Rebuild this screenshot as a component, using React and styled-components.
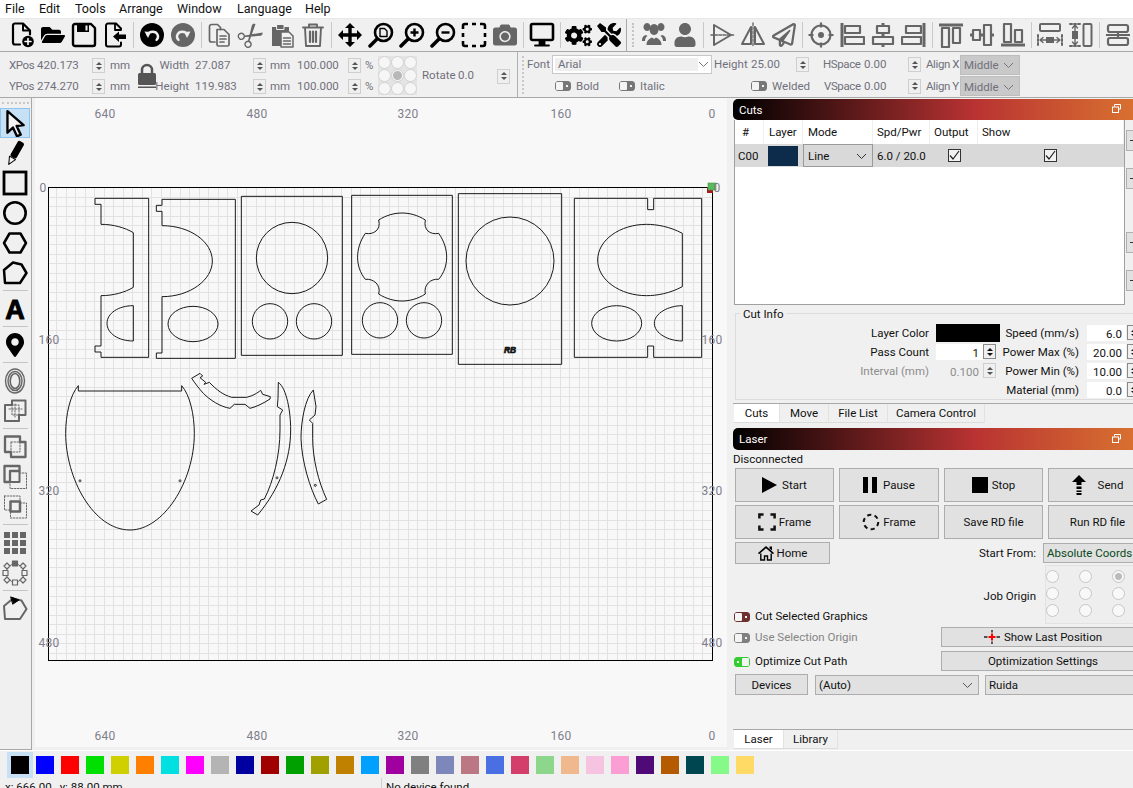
import React from 'react';
import styled, { createGlobalStyle } from 'styled-components';
import { FaCogs, FaTools, FaUser, FaCamera, FaMapMarkerAlt, FaRegPaperPlane, FaFolderOpen } from 'react-icons/fa';
import { BsScissors } from 'react-icons/bs';

const Global = createGlobalStyle`
  html, body { margin: 0; padding: 0; background: #f0f0f0; overflow: hidden; }
  * { box-sizing: border-box; }
`;

const Page = styled.div`
  width: 1133px; height: 788px; overflow: hidden; display: flex; flex-direction: column;
  background: #f0f0f0; color: #111; font: 11.5px/1 Roboto, "Open Sans", sans-serif;
`;
const MenuBar = styled.div`
  height: 18px; background: #fff; display: flex; align-items: center; padding-left: 5px; font-size: 12.5px;
`;
const MenuItem = styled.span`width: ${p => p.$w}px; flex: none;`;
const Toolbar = styled.div`
  height: 34px; display: flex; align-items: center; padding-left: 6.5px;
  border-top: 1px solid #e8e8e8; border-bottom: 1px solid #a8a8a8;
`;
const ToolBtn = styled.div`
  width: 31px; height: 31px; flex: none; display: flex; align-items: center; justify-content: center;
  color: ${p => p.$dim ? '#666' : '#000'}; font-size: 24px;
`;
const VSep = styled.div`width: 1px; height: 26px; background: #c8c8c8; margin: 0 ${p => p.$tight ? 2 : 3}px 0 2px; flex: none;`;
const BarBreak = styled.div`
  width: 13px; height: 33px; flex: none; display: flex; border-left: 1px solid #a8a8a8; margin-left: 1px;
  &::after { content: ''; width: 2px; height: 24px; margin: 4px 0 0 5px; border-left: 2px dotted #c4c4c4; }
`;
const PropBar = styled.div`
  height: 46px; display: flex; border-bottom: 1px solid #a8a8a8; color: #70707c;
`;
const PropA = styled.div`
  width: 518px; flex: none; border-right: 1px solid #b0b0b0; padding: 3px 0 0 9px; display: grid;
  grid-template-columns: 28px 55px 13px 28px 28px 34px 58px 13px 31px 51px 13px 17px 41px 39px 39px 13px;
  grid-template-rows: 21px 21px; align-items: center;
`;
const Cell = styled.span`
  white-space: nowrap; padding-left: ${p => p.$pl || 0}px;
  ${p => p.$w ? `width:${p.$w}px;flex:none;` : ''}
  ${p => p.$right ? 'justify-self:end;padding-right:6px;' : ''}
  ${p => p.$tight ? 'letter-spacing:-.4px;' : ''}
`;
const LockCell = styled.div`grid-row: 1 / span 2; grid-column: 5; display: flex; justify-content: center; color: #555;`;
const AnchorCell = styled.div`
  grid-row: 1 / span 2; grid-column: 13; display: grid; grid-template-columns: repeat(3, 13px); grid-auto-rows: 13px;
  background: #e4e4e4; width: 39px; margin-top: -1px; height: 39px;
`;
const AnchorDot = styled.i`
  display: block; border-radius: 50%; background: ${p => p.$on ? 'radial-gradient(circle,#b8b8b8 0 4px,#f4f4f4 5px)' : '#f6f6f6'}; border: 1px solid #d4d4d4;
`;
const RotateCell = styled.div`grid-row: 1 / span 2; grid-column: ${p => p.$col}; display: flex; align-items: center; padding-left: ${p => p.$pl || 0}px;`;
const Spin = styled.div`
  width: 13px; height: 15px; flex: none; border: 1px solid ${p => p.$dark ? '#8a8a8a' : '#cfcfcf'}; background: #efefef;
  display: flex; flex-direction: column; align-items: center; justify-content: center; gap: 2px;
  color: ${p => p.$dark ? '#111' : '#555'};
  &::before, &::after { content: ''; width: 0; height: 0; border-left: 3px solid transparent; border-right: 3px solid transparent; }
  &::before { border-bottom: 3px solid currentColor; }
  &::after { border-top: 3px solid currentColor; }
`;
const PropB = styled.div`flex: 1; position: relative; display: flex;`;
const Grip = styled.div`width: 9px; flex: none; &::after { content: ''; display: block; height: 38px; margin: 4px 0 0 4px; border-left: 2px dotted #c8c8c8; width: 2px; }`;
const PropBRows = styled.div`display: flex; flex-direction: column; padding-top: 2px;`;
const PropRow = styled.div`height: 22px; display: flex; align-items: center; ${p => p.$pl ? `padding-left:${p.$pl}px;` : ''}`;
const FontCombo = styled.div`
  width: ${p => p.$w}px; height: 19px; flex: none; border: 1px solid #c8c8c8; background: #fff; padding: 2px; display: flex; align-items: center;
  span { flex: 1; background: #efefef; height: 13px; padding-left: 3px; line-height: 13px; color: #70707c; }
`;
const Combo = styled.div`
  width: ${p => p.$w}px; height: ${p => p.$h || 20}px; flex: none; display: flex; align-items: center; padding-left: ${p => p.$pl || 3}px;
  background: ${p => p.$bg || '#c9c9c9'}; border: 1px solid ${p => p.$bd || '#bdbdbd'}; color: ${p => p.$color || '#70707c'};
  justify-content: space-between; padding-right: 5px; padding-top: 2px; white-space: nowrap; margin-left: ${p => p.$ml || 0}px;
`;
const Chevron = styled.svg`width: 11px; height: 7px; flex: none; margin-left: auto;`;
const Toggle = styled.i`
  display: block; width: 16px; height: 10px; flex: none; border-radius: 3px; position: relative;
  background: ${p => p.$c}; border: 1px solid ${p => p.$c};
  &::before { content: ''; position: absolute; top: 0; bottom: 0; width: 7px; border-radius: 1px; background: #f4f4f4; ${p => p.$on ? 'right: 0;' : 'left: 0;'} }
  &::after { content: ''; position: absolute; top: 3px; width: 2px; height: 2px; background: #f4f4f4; ${p => p.$on ? 'left: 2px;' : 'right: 2px;'} }
`;
const Main = styled.div`height: 652px; display: flex;`;
const ToolCol = styled.div`
  width: 32px; flex: none; border-right: 1px solid #a8a8a8; border-bottom: 1px solid #a8a8a8; display: flex; flex-direction: column;
`;
const ColGrip = styled.div`height: 10px; flex: none; &::after { content:''; display:block; margin: 4px 2px 0; border-top: 2px dotted #c8c8c8; }`;
const SideBtn = styled.div`
  height: 30px; width: 30px; flex: none; display: flex; align-items: center; justify-content: center;
  color: ${p => p.$dim ? '#666' : '#000'}; font-size: 24px;
  ${p => p.$active ? 'background:#c6e1f5;border:1px solid #8fc4ee;' : ''}
`;
const HSep = styled.div`height: 6px; flex: none; margin: 0 3px; &::after{content:'';display:block;height:1px;background:#c4c4c4;margin-top:2px;}`;
const CanvasWrap = styled.div`width: 695px; flex: none; position: relative; overflow: hidden; background: #f0f0f0;`;
const CanvasSvg = styled.svg`position: absolute; left: 0; top: 0; display: block;`;
const RulerText = styled.text`font: 12px Roboto, "Open Sans", sans-serif; letter-spacing: .3px; fill: #7e7e8c; text-anchor: middle; dominant-baseline: central;`;
const Gutter = styled.div`width: 6px; flex: none;`;
const Dock = styled.div`width: 400px; flex: none; display: flex; flex-direction: column; overflow: hidden;`;
const DockHead = styled.div`
  height: ${p => p.$h}px; margin-top: ${p => p.$mt}px; flex: none; display: flex; align-items: center; justify-content: space-between;
  padding: 2px 12px 0 6px; color: #fff; border-radius: 5px 0 0 5px;
  background: linear-gradient(90deg, #000 0%, #b83232 60%, #d87030 100%);
  svg { margin-top: -4px; }
`;
const TableArea = styled.div`height: 185px; flex: none; display: flex; padding-left: 1px;`;
const TableBox = styled.div`width: 391px; flex: none; background: #fff; border: 1px solid #a0a0a0; border-top: 0;`;
const TableRowGrid = styled.div`
  display: grid; grid-template-columns: 29px 39px 70px 57px 48px 1fr; height: ${p => p.$h}px; align-items: center;
  background: ${p => p.$bg || '#fff'};
`;
const Th = styled.div`height: 100%; display: flex; align-items: center; padding: 2px 0 0 ${p => p.$pl || 5}px; border-right: 1px solid #efefef;`;
const Td = styled.div`height: 100%; display: flex; align-items: center; padding-left: ${p => p.$pl || 0}px; padding-top: ${p => p.$text ? 2 : 0}px; justify-content: ${p => p.$center ? 'center' : 'flex-start'};`;
const LayerSwatch = styled.div`width: 30px; height: 20px; margin-left: 4px; background: #0d2b4b;`;
const Check = styled.div`
  width: 13px; height: 13px; border: 1px solid #333; background: #f2f2f2; display: flex; align-items: center; justify-content: center;
`;
const Strip = styled.div`flex: 1; padding-left: 1px; display: flex; flex-direction: column;`;
const StripBtn = styled.div`
  width: 20px; height: 21px; margin-top: ${p => p.$mt}px; background: #e1e1e1; border: 1px solid #b0b0b0; display: flex; align-items: center; padding-left: 3px;
  &::after { content: ''; width: 3px; height: 1px; background: #333; }
`;
const Group = styled.div`
  height: 87px; margin: 8px 0 0 2px; flex: none; border: 1px solid #dcdcdc; position: relative; padding: 9px 0 0 0; width: 420px;
`;
const GroupTitle = styled.span`position: absolute; top: -5px; left: 4px; background: #f0f0f0; padding: 0 3px;`;
const InfoRow = styled.div`
  height: 19px; display: grid; grid-template-columns: 193px 71px 79px 8px 40px 13px; align-items: center;
  color: ${p => p.$dis ? '#8c8c8c' : 'inherit'};
`;
const InfoLabel = styled.span`text-align: right; white-space: nowrap; padding-top: 2px; color: ${p => p.$solid ? '#111' : 'inherit'};`;
const FieldPair = styled.div`display: flex; align-items: center; padding-left: 7px;`;
const Input = styled.div`
  width: ${p => p.$w}px; height: 16px; background: ${p => p.$off ? 'transparent' : '#fff'}; flex: none; text-align: right; padding-right: 4px; line-height: 18px;
  color: ${p => p.$solid ? '#111' : 'inherit'};
`;
const ColorWell = styled.div`height: 18px; width: 64px; background: #000;`;
const Tabs = styled.div`height: 20px; margin-top: ${p => p.$mt || 0}px; flex: none; display: flex; border-top: 1px solid #a8a8a8; padding-left: 1px; ${p => p.$foot ? 'margin-top:auto;margin-bottom:1px;' : ''}`;
const Tab = styled.div`
  width: ${p => p.$w}px; flex: none; display: flex; align-items: center; justify-content: center; padding-top: 2px;
  background: ${p => p.$on ? '#fff' : 'transparent'}; border-bottom: 1px solid ${p => p.$on ? '#ddd' : '#dcdcdc'}; border-right: 1px solid #e2e2e2;
`;
const StatusLine = styled.div`height: 18px; flex: none; display: flex; align-items: center; padding-top: 2px;`;
const BtnRow = styled.div`display: grid; grid-template-columns: 99px 100px 99px 99px; column-gap: 5px; margin: ${p => p.$mt || 0}px 0 0 2px; height: 34px; flex: none; width: 420px;`;
const Btn = styled.div`
  display: flex; align-items: center; justify-content: center; gap: ${p => p.$gap ?? 5}px; background: #e1e1e1; border: 1px solid #adadad; white-space: nowrap; padding-top: 2px;
  ${p => p.$w ? `width:${p.$w}px;flex:none;` : ''} ${p => p.$h ? `height:${p.$h}px;` : ''}
  svg { margin-top: -2px; }
`;
const HomeRow = styled.div`height: 22px; margin: 3px 0 0 2px; flex: none; display: flex; align-items: center; width: 410px;`;
const RightLabel = styled.span`margin-left: auto; padding: 2px 7px 0 0;`;
const OriginRow = styled.div`height: 59px; margin-top: 1px; flex: none; display: flex; padding-left: 1px; width: 400px;`;
const OptionLine = styled.div`display: flex; align-items: center; gap: 5px; padding-top: 2px; color: ${p => p.$dis ? '#858585' : 'inherit'}; white-space: nowrap; flex: none; ${p => p.$w ? `width:${p.$w}px;` : ''}`;
const BottomOpt = styled(OptionLine)`align-self: flex-end; height: 16px;`;
const OriginLabel = styled.span`margin-left: auto; align-self: center; padding: 4px 9px 0 0; white-space: nowrap;`;
const RadioGrid = styled.div`
  width: 88px; flex: none; display: grid; grid-template-columns: repeat(3, 33px); grid-auto-rows: 17px; background: #eeeeee; border: 1px solid #e2e2e2;
  padding: 4px 0 0 0; justify-items: start; border-right: 0;
`;
const Radio = styled.i`
  display: block; width: 13px; height: 13px; border-radius: 50%; border: 1px solid #c6c6c6;
  background: ${p => p.$on ? 'radial-gradient(circle,#bbb 0 3px,#f6f6f6 4px)' : '#f8f8f8'};
`;
const OptRow = styled.div`height: 20px; margin: ${p => p.$mt}px 0 0 1px; flex: none; display: flex; align-items: center;`;
const DeviceRow = styled.div`height: 21px; margin: 3px 0 0 2px; flex: none; display: flex; align-items: center; width: 420px;`;
const Palette = styled.div`height: 28px; flex: none; display: flex; align-items: center; padding-left: 11px; gap: 7px; border-top: 1px solid #fff;`;
const Swatch = styled.div`
  width: 18px; height: 18px; flex: none; background: ${p => p.$c};
  ${p => p.$sel ? 'outline: 4px solid #c6e1f5; box-shadow: 0 0 0 3px #c6e1f5;' : ''}
`;
const StatusBar = styled.div`height: 10px; flex: none; display: flex; overflow: hidden; line-height: 15px;`;
const StatusCell = styled.div`width: ${p => p.$w}px; flex: none; padding-left: ${p => p.$pl}px; white-space: nowrap; border-right: ${p => p.$line ? '1px solid #d0d0d0' : '0'}; padding-top: 2px;`;
const Scissors = styled(BsScissors)`transform: rotate(50deg);`;
const Gears = styled(FaCogs)`font-size: 27px;`;

const Svg = ({ s = 26, children, ...r }) => <svg width={s} height={s} viewBox="0 0 26 26" fill="none" stroke="currentColor" strokeLinejoin="round" strokeLinecap="round" {...r}>{children}</svg>;

const I = {
  New: () => <Svg><path d="M11 22.5H6a2 2 0 0 1-2-2V3.5a2 2 0 0 1 2-2h8l7 7v4" strokeWidth="2.2" /><path d="M14 2v6.5h6" strokeWidth="2" /><circle cx="19" cy="19.5" r="5.8" fill="currentColor" stroke="none" /><path d="M19 16.5v6M16 19.5h6" stroke="#fff" strokeWidth="1.6" /></Svg>,
  Save: () => <Svg><path d="M2 4a2 2 0 0 1 2-2h16l4 4v16a2 2 0 0 1-2 2H4a2 2 0 0 1-2-2z" strokeWidth="2.4" /><path d="M6 2h12v8H6z" fill="currentColor" stroke="none" /><path d="M14.5 3.5h2v5h-2z" fill="#f0f0f0" stroke="none" /></Svg>,
  Import: () => <Svg><path d="M19 7v-.5L14 1.5H6a2 2 0 0 0-2 2v19a2 2 0 0 0 2 2h11a2 2 0 0 0 2-2v-2" strokeWidth="2" /><path d="M13 2v6h6" strokeWidth="1.8" /><path d="M11 14.5l6-5v3h7v4.500h-7v3z" fill="currentColor" stroke="none" /></Svg>,
  Undo: () => <Svg><circle cx="13" cy="13" r="12" fill="currentColor" stroke="none" /><path d="M8.500 12.500c2-3.500 8-4 10 0 1 2 .5 4-1 5.500" stroke="#f0f0f0" strokeWidth="2.400" /><path d="M5.500 9.500l6.500 .5-3 6z" fill="#f0f0f0" stroke="none" /></Svg>,
  Redo: () => <Svg><circle cx="13" cy="13" r="12" fill="currentColor" stroke="none" /><path d="M17.500 12.500c-2-3.500-8-4-10 0-1 2-.5 4 1 5.500" stroke="#f0f0f0" strokeWidth="2.400" /><path d="M20.500 9.500l-6.500 .5 3 6z" fill="#f0f0f0" stroke="none" /></Svg>,
  Copy: () => <Svg strokeWidth="1.700"><path d="M8 20H4.500a2 2 0 0 1-2-2V4.500a2 2 0 0 1 2-2h6l3 3v2" /><path d="M10 7.500h7l5 5v10a1.500 1.500 0 0 1-1.500 1.500h-9A1.500 1.500 0 0 1 10 22.500z" /><path d="M13 14h6M13 17h6M13 20h4" /></Svg>,
  Paste: () => <Svg><path d="M3 5h17v19H3z" fill="currentColor" stroke="none" /><path d="M8 2.500h7v5H8z" fill="currentColor" stroke="#f0f0f0" strokeWidth="1" /><path d="M12 10h8l4 4v11H12z" fill="#f0f0f0" stroke="currentColor" strokeWidth="1.500" /><path d="M14.500 16h7M14.500 19h7M14.500 22h7" strokeWidth="1.400" /></Svg>,
  Trash: () => <Svg strokeWidth="1.900"><path d="M3 5.500h20M9 5.500V2.500h8v3M5 5.500l1 18.500h14l1-18.500" /><path d="M10 9.500v10.500M13 9.500v10.500M16 9.500v10.500" strokeWidth="2.200" /></Svg>,
  Move: () => <Svg><path d="M13 1l5 5h-3.300v5.300H20V8l5 5-5 5v-3.300h-5.300V20H18l-5 5-5-5h3.300v-5.300H6V18l-5-5 5-5v3.300h5.300V6H8z" fill="currentColor" stroke="none" /></Svg>,
  ZoomPage: () => <Svg><circle cx="15.500" cy="10.500" r="8.500" strokeWidth="2.600" /><path d="M9 17l-7 7" strokeWidth="3.500" /><path d="M12 6.500h4.500l2.500 2.500v5.500h-7z" strokeWidth="1.400" /></Svg>,
  ZoomIn: () => <Svg><circle cx="15.500" cy="10.500" r="8.500" strokeWidth="2.600" /><path d="M9 17l-7 7" strokeWidth="3.500" /><path d="M15.500 6.500v8M11.500 10.500h8" strokeWidth="2.400" strokeLinecap="butt" /></Svg>,
  ZoomOut: () => <Svg><circle cx="15.500" cy="10.500" r="8.500" strokeWidth="2.600" /><path d="M9 17l-7 7" strokeWidth="3.500" /><path d="M11.500 10.500h8" strokeWidth="2.400" strokeLinecap="butt" /></Svg>,
  Frame: () => <Svg><path d="M2 7V4a2 2 0 0 1 2-2h3M11 2h4M19 2h3a2 2 0 0 1 2 2v3M24 11v4M24 19v3a2 2 0 0 1-2 2h-3M15 24h-4M7 24H4a2 2 0 0 1-2-2v-3M2 15v-4" strokeWidth="2.600" strokeLinecap="butt" /></Svg>,
  Monitor: () => <Svg><rect x="2" y="2" width="22" height="16" rx="1.500" strokeWidth="2.600" /><path d="M10.500 18.500h5v4h-5zM6 23.500h14" fill="currentColor" strokeWidth="1.800" /></Svg>,
  Group: () => <Svg><path d="M6 9a3.500 4 0 1 1 .1 0zM1 18c0-3 2-4.500 4-5l1.500 1c-1.500 1-2.500 2.500-2.500 5H1zM20 9a3.500 4 0 1 0-.1 0zM25 18c0-3-2-4.500-4-5l-1.500 1c1.500 1 2.500 2.500 2.500 5h3z" fill="currentColor" stroke="none" /><path d="M13 13a4.500 5.500 0 1 1 .1 0zM5.500 23c0-4.500 3-6.500 5.500-7.500l2 1.500 2-1.500c2.500 1 5.500 3 5.500 7.500z" fill="currentColor" stroke="none" /></Svg>,
  Flip: () => <Svg strokeWidth="2"><path d="M5 3l17 10-17 10z" /><path d="M2 13h23" strokeDasharray="2.500 1.500" strokeWidth="1.600" /></Svg>,
  Mirror: () => <Svg strokeWidth="2"><path d="M11 5v17H2z" /><path d="M15 5v17h9z" /><path d="M13 1v24" strokeDasharray="2.500 1.500" strokeWidth="1.400" /></Svg>,
  Target: () => <Svg strokeWidth="2.200"><circle cx="13" cy="13" r="9.500" /><circle cx="13" cy="13" r="3" fill="currentColor" stroke="none" /><path d="M13 .5v5M13 20.500v5M.5 13h5M20.500 13h5" strokeLinecap="butt" /></Svg>,
  AlignL: () => <Svg strokeWidth="2.200"><path d="M3 1v24" strokeWidth="3" strokeLinecap="butt" /><rect x="6" y="4" width="15" height="7" /><rect x="6" y="15" width="19" height="7" /></Svg>,
  AlignC: () => <Svg strokeWidth="2.200"><path d="M13 1v24" strokeWidth="3" strokeLinecap="butt" /><rect x="7" y="4" width="12" height="7" fill="#f0f0f0" /><rect x="3" y="15" width="20" height="7" fill="#f0f0f0" /></Svg>,
  AlignR: () => <Svg strokeWidth="2.200"><path d="M23 1v24" strokeWidth="3" strokeLinecap="butt" /><rect x="5" y="4" width="15" height="7" /><rect x="1" y="15" width="19" height="7" /></Svg>,
  AlignT: () => <Svg strokeWidth="2.200"><path d="M1 3h24" strokeWidth="3" strokeLinecap="butt" /><rect x="4" y="6" width="7" height="19" /><rect x="15" y="6" width="7" height="15" /></Svg>,
  AlignM: () => <Svg strokeWidth="2.200"><path d="M1 13h24" strokeWidth="3" strokeLinecap="butt" /><rect x="4" y="8" width="7" height="10" fill="#f0f0f0" /><rect x="15" y="3" width="7" height="20" fill="#f0f0f0" /></Svg>,
  AlignB: () => <Svg strokeWidth="2.200"><path d="M1 23h24" strokeWidth="3" strokeLinecap="butt" /><rect x="4" y="2" width="7" height="18" /><rect x="15" y="8" width="7" height="12" /></Svg>,
  DistH: () => <Svg strokeWidth="2"><rect x="3" y="2" width="20" height="7" rx="1" /><path d="M1 13v10M25 13v10" strokeDasharray="2 2" /><rect x="9" y="15" width="8" height="6" fill="currentColor" stroke="none" /><path d="M3 18h20M6 15.500L3 18l3 2.500M20 15.500l3 2.500-3 2.500" strokeWidth="1.400" /></Svg>,
  DistV: () => <Svg strokeWidth="2"><rect x="15.500" y="2" width="8" height="22" rx="1" /><path d="M2 2h10M2 24h10" strokeDasharray="2 2" /><rect x="4" y="9" width="6" height="8" fill="currentColor" stroke="none" /><path d="M7 3v20M4.500 6L7 3l2.500 3M4.500 20L7 23l2.500-3" strokeWidth="1.400" /></Svg>,
  SameH: () => <Svg strokeWidth="2.200"><rect x="3" y="3" width="20" height="7" rx="2" /><rect x="3" y="16" width="20" height="7" rx="2" /><path d="M13 10v6M1 13h24" strokeLinecap="butt" /></Svg>,
  Lock: () => <svg width="20" height="26" viewBox="0 0 20 26"><path d="M5 11V7a5 5 0 0 1 10 0v4" fill="none" stroke="currentColor" strokeWidth="2.500" /><rect x="1" y="10" width="18" height="12" rx="1.500" fill="currentColor" /><rect x="1" y="23.500" width="18" height="1.500" fill="currentColor" /></svg>,
  Select: () => <Svg s={28}><path d="M6 2l15 13-6.500 .8 3.800 8-3.500 1.600-3.700-8.200L6 22z" fill="#f4f4f4" stroke="#000" strokeWidth="2.200" /></Svg>,
  Pencil: () => <Svg><g transform="rotate(30 13 13)"><rect x="9.800" y="0" width="7" height="18" rx="2" fill="currentColor" stroke="none" /><path d="M9.800 18.500h7L13.300 26z" fill="#f0f0f0" stroke="currentColor" strokeWidth="1" /></g></Svg>,
  Rect: () => <Svg><rect x="2" y="2" width="22" height="22" strokeWidth="2.800" strokeLinejoin="miter" /></Svg>,
  Circle: () => <Svg><circle cx="13" cy="13" r="10.700" strokeWidth="2.600" /></Svg>,
  Hex: () => <Svg><path d="M7.500 3.500h11L24 13l-5.500 9.500h-11L2 13z" strokeWidth="2.500" /></Svg>,
  Poly: () => <Svg><path d="M2 10l9-7.500 8.500 2L24.500 13l-6.500 10H3z" strokeWidth="2.500" /></Svg>,
  A: () => <Svg><text x="13" y="23" fontFamily="Liberation Sans" fontSize="27" fontWeight="700" textAnchor="middle" fill="currentColor" stroke="currentColor" strokeWidth="1">A</text></Svg>,
  Rings: () => <Svg><ellipse cx="13" cy="13" rx="9.500" ry="12" strokeWidth="1.400" /><ellipse cx="13" cy="13" rx="7" ry="9.500" strokeWidth="1.400" /><ellipse cx="13" cy="13" rx="4.800" ry="7.500" strokeWidth="1.600" /></Svg>,
  Bool: () => <Svg strokeWidth="2"><path d="M3 7h7V2.500h13.500V17H17v6H3z" /><path d="M10 7h7v10h-7z" strokeDasharray="1.500 1.500" strokeWidth="1" /><path d="M7 11h13M13 6v13" strokeDasharray="1.500 1.500" strokeWidth="1" /></Svg>,
  Union: () => <Svg strokeWidth="2.300"><path d="M3 2.500h15V8h5.500v15H9v-5H3z" /><path d="M9 8h9v10H9z" strokeDasharray="1.500 1.500" strokeWidth="1" /></Svg>,
  Diff: () => <Svg strokeWidth="2.300"><path d="M2.500 2h15v5H8v11H2.500z" /><path d="M8 7h9.500v11H8z" strokeWidth="2" /><path d="M17.500 9h7v15.500H8V18" strokeDasharray="1.500 1.500" strokeWidth="1" /></Svg>,
  Inter: () => <Svg><path d="M2.500 2h15.500v6M2.500 2v14h6" strokeDasharray="1.500 1.500" strokeWidth="1" /><path d="M8.500 7.500H18v10H8.500z" strokeWidth="2.500" /><path d="M18 9h6.500v15H8.500v-6" strokeDasharray="1.500 1.500" strokeWidth="1" /></Svg>,
  Dots: () => <Svg><path d="M2 2h6v6H2zM10 2h6v6h-6zM18 2h6v6h-6zM2 10h6v6H2zM10 10h6v6h-6zM18 10h6v6h-6zM2 18h6v6H2zM10 18h6v6h-6zM18 18h6v6h-6z" fill="currentColor" stroke="none" /></Svg>,
  Circular: () => <Svg strokeWidth="1.200"><circle cx="13" cy="13" r="9" strokeWidth="1" /><rect x="10.500" y="1" width="5" height="5" fill="currentColor" /><rect x="10.500" y="20" width="5" height="5" fill="#f0f0f0" /><rect x="1" y="10.500" width="5" height="5" fill="#f0f0f0" /><rect x="20" y="10.500" width="5" height="5" fill="#f0f0f0" /><path d="M5 3l3 3-3 3-3-3zM21 3l3 3-3 3-3-3zM5 17l3 3-3 3-3-3zM21 17l3 3-3 3-3-3z" fill="#f0f0f0" /></Svg>,
  PolyEdit: () => <Svg><path d="M2 10l9-7.500 8.500 2L24.500 13l-6.500 10H3z" strokeWidth="2" /><path d="M9 1l8 3-6 4z" fill="#000" stroke="#000" strokeWidth="1" /></Svg>,
  FrameDash: () => <Svg s={18}><path d="M2 8V2h6M18 2h6v6M24 18v6h-6M8 24H2v-6" strokeWidth="3.600" strokeLinecap="butt" strokeLinejoin="miter" /></Svg>,
  CircleDash: () => <Svg s={18}><circle cx="13" cy="13" r="10.500" strokeWidth="3" strokeDasharray="6 4.900" strokeLinecap="butt" /></Svg>,
  Home: () => <svg width="16" height="16" viewBox="0 0 16 16"><path d="M0 8l8-7 8 7-1 1.200L8 3.200 1 9.200z" fill="#000" /><path d="M2.800 8.500V15h3.700v-4h3V15h3.700V8.500" fill="none" stroke="#000" strokeWidth="1.400" /><path d="M11.500 1.500H14v4l-2.500-2z" fill="#000" /></svg>,
  Play: () => <svg width="15" height="16" viewBox="0 0 15 16"><path d="M0 0l15 8-15 8z" fill="#000" /></svg>,
  Pause: () => <svg width="15" height="16" viewBox="0 0 15 16"><path d="M0 0h5v16H0zM9 0h5v16H9z" fill="#000" /></svg>,
  Stop: () => <svg width="16" height="16"><rect width="16" height="16" fill="#000" /></svg>,
  Send: () => <svg width="14" height="20" viewBox="0 0 14 20"><path d="M7 0l7 7H9.500v3h-5V7H0z" fill="#000" /><path d="M4.500 11.500h5v2.500h-5zM4.500 15.500h5v1.500h-5zM4.500 18h5v2h-5z" fill="#000" /></svg>,
  Cross: () => <svg width="16" height="14" viewBox="0 0 16 14"><path d="M0 7h3.500M12.500 7H16M8 0v2.500M8 11.500V14" stroke="#222" strokeWidth="1.400" fill="none" /><path d="M4.500 7h7M8 3.500v7" stroke="#f00" strokeWidth="2" fill="none" /></svg>,
  Tick: () => <svg width="11" height="11" viewBox="0 0 11 11"><path d="M1 5.500l3 3.500 6-8" stroke="#222" strokeWidth="1.200" fill="none" /></svg>,
  Restore: () => <svg width="9" height="9" viewBox="0 0 9 9" fill="none" stroke="#fff" strokeWidth="1"><path d="M2.500 2.500V.5h6v4.500H7" /><rect x=".5" y="3" width="6" height="5.500" /></svg>,
};
const Chev = ({ c = '#777' }) => <Chevron viewBox="0 0 11 7"><path d="M1 1l4.500 4.500L10 1" fill="none" stroke={c} strokeWidth="1" /></Chevron>;

const row1 = [
  [I.New], [FaFolderOpen], [I.Save], [I.Import], 0, [I.Undo], [I.Redo, 1], 0, [I.Copy, 1], [Scissors, 1], [I.Paste, 1], [I.Trash, 1], 0,
  [I.Move], [I.ZoomPage], [I.ZoomIn], [I.ZoomOut], [I.Frame], [FaCamera, 1], 0, [I.Monitor], 't', [Gears], [FaTools], 'b',
  [I.Group, 1], [FaUser, 1], 0, [I.Flip, 1], [I.Mirror, 1], [FaRegPaperPlane, 1], 0, [I.Target, 1], [I.AlignL, 1], [I.AlignC, 1], [I.AlignR, 1], 0,
  [I.AlignT, 1], [I.AlignM, 1], [I.AlignB, 1], 0, [I.DistH, 1], [I.DistV, 1], 0, [I.SameH, 1],
];
const side = [
  [I.Select, 0, 1], [I.Pencil], [I.Rect], [I.Circle], [I.Hex], [I.Poly], 0, [I.A], 0, [FaMapMarkerAlt], 0, [I.Rings, 1], [I.Bool, 1], 0,
  [I.Union, 1], [I.Diff, 1], [I.Inter, 1], 0, [I.Dots, 1], [I.Circular, 1], 0, [I.PolyEdit, 1],
];
const colors = ['#000000', '#0000ff', '#ff0000', '#00e000', '#d0d000', '#ff8000', '#00e0e0', '#ff00ff', '#b4b4b4', '#0000a0', '#a00000', '#00a000', '#a0a000', '#c08000', '#00a0ff', '#a000a0', '#808080', '#7d87b9', '#bb7784', '#4a6fe3', '#d33f6a', '#8cd78c', '#f0b98d', '#f6c4e1', '#fa9ed4', '#500a78', '#b45a00', '#004650', '#86fa88', '#ffdb66'];
const menus = [['File', 34], ['Edit', 36], ['Tools', 44], ['Arrange', 58], ['Window', 60], ['Language', 68], ['Help', 40]];

const gx = Array.from({ length: 70 }, (_, i) => 712 - 9.5 * i);
const gy = Array.from({ length: 50 }, (_, i) => 187.5 + 9.5 * i);
const xLabels = [[105, '640'], [257, '480'], [408, '320'], [561, '160'], [712, '0']];
const yLabels = [[188, '0', 43, 717], [340, '160', 49, 712], [491, '320', 49, 712], [643, '480', 49, 712]];

const Shape = ({ d }) => <path d={d} fill="none" stroke="#1a1a1a" strokeWidth="1" vectorEffect="non-scaling-stroke" />;
const Round = ({ x, y, r }) => <circle cx={x} cy={y} r={r} fill="none" stroke="#1a1a1a" strokeWidth="1" vectorEffect="non-scaling-stroke" />;
const Oval = ({ x, y, rx, ry }) => <ellipse cx={x} cy={y} rx={rx} ry={ry} fill="none" stroke="#1a1a1a" strokeWidth="1" vectorEffect="non-scaling-stroke" />;
const Frame3 = ({ x, y, children }) => <g transform={`translate(${x} ${y}) scale(${1 / 3})`}>{children}</g>;

const Drawing = () => (
  <CanvasSvg width="695" height="652" viewBox="32 98 695 652">
    <rect x="35" y="98" width="692" height="649" fill="#f8f8f8" />
    <g stroke="#e2e2e2" strokeWidth="1" shapeRendering="crispEdges">
      {gx.map(x => <line key={x} x1={x} x2={x} y1="187.500" y2="660" />)}
      {gy.map(y => <line key={y} y1={y} y2={y} x1="48.500" x2="712" />)}
    </g>
    <rect x="48.500" y="187.500" width="664" height="473" fill="none" stroke="#000" strokeWidth="1" />
    <rect x="707" y="187" width="6" height="6" fill="#a81c1c" />
    <rect x="708" y="183" width="8" height="7" fill="#5cb85c" stroke="#3f9a3f" strokeWidth=".6" />
    {xLabels.map(([x, t]) => <React.Fragment key={t}><RulerText x={x} y="114">{t}</RulerText><RulerText x={x} y="736">{t}</RulerText></React.Fragment>)}
    {yLabels.map(([y, t, a, b]) => <React.Fragment key={t}><RulerText x={a} y={y}>{t}</RulerText><RulerText x={b} y={y}>{t}</RulerText></React.Fragment>)}
    <Frame3 x="40" y="180">
      <Shape d="M165 55H326V532H183V516H165V498H183V347C220 347 255 337 280 322V158C255 143 220 133 183 133V73H165Z" />
      <Shape d="M280 377C235 377 201 400 201 430C201 460 235 483 280 483Z" />
      <Shape d="M366 58H586V535H349V519H366V350C450 350 517 300 517 243C517 185 450 137 366 137V94H349V76H366Z" />
      <Oval x="459" y="432" rx="75" ry="53" />
      <Shape d="M604 49H907V526H604Z" />
      <Round x="756" y="234" r="107" /><Round x="690" y="424" r="53" /><Round x="822" y="424" r="53" />
    </Frame3>
    <Frame3 x="340" y="180">
      <Shape d="M35 46H337V523H35Z" />
      <Shape d="M116 120C160 92 212 92 256 120C250 150 270 165 296 160C328 205 328 260 296 298C272 295 250 315 256 342C212 370 160 370 116 342C124 315 100 295 76 298C45 260 45 205 76 160C100 165 124 150 116 120Z" />
      <Round x="120" y="421" r="53" /><Round x="252" y="421" r="53" />
      <Shape d="M355 41H665V553H355Z" />
      <Round x="510" y="243" r="132" />
      <text x="510" y="520" textAnchor="middle" fontFamily="Liberation Sans" fontStyle="italic" fontWeight="700" fontSize="25" fill="#111" stroke="#111" strokeWidth="2">RB</text>
      <Shape d="M703 55H923V89H941V55H1085V532H941V498H923V532H703Z" />
      <Shape d="M1027 160C990 140 950 133 920 133C840 133 773 180 773 240C773 300 840 347 920 347C950 347 990 340 1027 320Z" />
      <Oval x="830" y="430" rx="75" ry="53" />
      <Shape d="M1027 377C985 377 943 400 943 430C943 460 985 483 1027 483Z" />
    </Frame3>
    <Frame3 x="50" y="365">
      <Shape d="M85 78H395V62C420 90 433 150 433 205C433 350 340 495 240 495C130 495 47 340 47 205C47 150 60 90 85 62Z" />
      <circle cx="90" cy="347" r="4.500" fill="#666" /><circle cx="390" cy="347" r="4.500" fill="#666" />
      <Shape d="M425 40L450 25L458 33L450 38L467 52L462 58L478 52C500 75 520 90 545 97H590C610 92 622 84 632 76L638 88L661 95L660 102C640 115 620 125 600 130L585 118H553L540 130C510 125 480 105 460 85C448 72 435 55 425 40Z" />
      <Shape d="M685 52C710 70 722 140 722 195C722 280 690 370 623 450L603 438L627 420L632 405L643 402C670 350 690 270 690 195V150L698 135L682 125L684 100Z" />
      <circle cx="681" cy="338" r="4.500" fill="#666" />
      <Shape d="M790 75C765 100 753 170 753 220C755 290 780 370 805 417L830 403C805 350 788 280 788 220V175L778 165L795 150L798 125Z" />
      <Round x="796" y="361" r="3" />
    </Frame3>
  </CanvasSvg>
);

export default function App() {
  return (
    <Page>
      <Global />
      <MenuBar>{menus.map(([t, w]) => <MenuItem key={t} $w={w}>{t}</MenuItem>)}</MenuBar>
      <Toolbar>
        {row1.map((it, i) => {
          if (it === 0) return <VSep key={i} />;
          if (it === 't') return <VSep key={i} $tight />;
          if (it === 'b') return <BarBreak key={i} />;
          const C = it[0];
          return <ToolBtn key={i} $dim={it[1]}><C /></ToolBtn>;
        })}
      </Toolbar>
      <PropBar>
        <PropA>
          <Cell $tight>XPos</Cell><Cell>420.173</Cell><Spin /><Cell $pl={5}>mm</Cell>
          <LockCell><I.Lock /></LockCell>
          <Cell $right>Width</Cell><Cell>27.087</Cell><Spin /><Cell $pl={4}>mm</Cell><Cell>100.000</Cell><Spin /><Cell $pl={4}>%</Cell>
          <AnchorCell>{Array.from({ length: 9 }, (_, i) => <AnchorDot key={i} $on={i === 4} />)}</AnchorCell>
          <RotateCell $col={14} $pl={3}>Rotate</RotateCell><RotateCell $col={15}>0.0</RotateCell><RotateCell $col={16}><Spin /></RotateCell>
          <Cell $tight>YPos</Cell><Cell>274.270</Cell><Spin /><Cell $pl={5}>mm</Cell>
          <Cell $right>Height</Cell><Cell>119.983</Cell><Spin /><Cell $pl={4}>mm</Cell><Cell>100.000</Cell><Spin /><Cell $pl={4}>%</Cell>
        </PropA>
        <PropB>
          <Grip />
          <PropBRows>
            <PropRow>
              <Cell $w={25}>Font</Cell>
              <FontCombo $w={160}><span>Arial</span><Chev /></FontCombo>
              <Cell $w={39} $pl={2}>Height</Cell><Cell $w={45}>25.00</Cell><Spin /><Cell $w={14} />
              <Cell $w={41} $tight>HSpace</Cell><Cell $w={44}>0.00</Cell><Spin /><Cell $w={5} />
              <Cell $w={34} $tight>Align X</Cell><Combo $w={60}>Middle<Chev /></Combo>
            </PropRow>
            <PropRow $pl={28}>
              <Toggle $c="#777" /><Cell $w={48} $pl={5}>Bold</Cell>
              <Toggle $c="#777" /><Cell $w={116} $pl={5}>Italic</Cell>
              <Toggle $c="#777" /><Cell $w={57} $pl={5}>Welded</Cell>
              <Cell $w={40} $tight>VSpace</Cell><Cell $w={44}>0.00</Cell><Spin /><Cell $w={5} />
              <Cell $w={34} $tight>Align Y</Cell><Combo $w={60}>Middle<Chev /></Combo>
            </PropRow>
          </PropBRows>
        </PropB>
      </PropBar>
      <Main>
        <ToolCol>
          <ColGrip />
          {side.map((it, i) => {
            if (it === 0) return <HSep key={i} />;
            const C = it[0];
            return <SideBtn key={i} $dim={it[1]} $active={it[2]}><C /></SideBtn>;
          })}
        </ToolCol>
        <CanvasWrap><Drawing /></CanvasWrap>
        <Gutter />
        <Dock>
          <DockHead $h={21} $mt={1}>Cuts<I.Restore /></DockHead>
          <TableArea>
            <TableBox>
              <TableRowGrid $h={24}>
                <Th $pl={7}>#</Th><Th>Layer</Th><Th>Mode</Th><Th $pl={4}>Spd/Pwr</Th><Th $pl={4}>Output</Th><Th $pl={4}>Show</Th>
              </TableRowGrid>
              <TableRowGrid $h={23} $bg="#d9d9d9">
                <Td $pl={3} $text>C00</Td><Td><LayerSwatch /></Td>
                <Td><Combo $w={70} $h={23} $bg="#d9d9d9" $bd="#9a9a9a" $color="#111" $pl={4}>Line<Chev c="#333" /></Combo></Td>
                <Td $pl={4} $text>6.0 / 20.0</Td>
                <Td $center><Check><I.Tick /></Check></Td>
                <Td $pl={66}><Check><I.Tick /></Check></Td>
              </TableRowGrid>
            </TableBox>
            <Strip>
              <StripBtn $mt={10} /><StripBtn $mt={17} /><StripBtn $mt={43} /><StripBtn $mt={17} />
            </Strip>
          </TableArea>
          <Group>
            <GroupTitle>Cut Info</GroupTitle>
            <InfoRow><InfoLabel>Layer Color</InfoLabel><FieldPair><ColorWell /></FieldPair><InfoLabel>Speed (mm/s)</InfoLabel><span /><Input $w={39}>6.0</Input><Spin $dark /></InfoRow>
            <InfoRow><InfoLabel>Pass Count</InfoLabel><FieldPair><Input $w={47}>1</Input><Spin $dark /></FieldPair><InfoLabel>Power Max (%)</InfoLabel><span /><Input $w={39}>20.00</Input><Spin $dark /></InfoRow>
            <InfoRow $dis><InfoLabel>Interval (mm)</InfoLabel><FieldPair><Input $w={47} $off>0.100</Input><Spin /></FieldPair><InfoLabel $solid>Power Min (%)</InfoLabel><span /><Input $w={39} $solid>10.00</Input><Spin $dark /></InfoRow>
            <InfoRow><span /><span /><InfoLabel>Material (mm)</InfoLabel><span /><Input $w={39}>0.0</Input><Spin $dark /></InfoRow>
          </Group>
          <Tabs $mt={3}><Tab $on $w={46}>Cuts</Tab><Tab $w={49}>Move</Tab><Tab $w={59}>File List</Tab><Tab $w={97}>Camera Control</Tab></Tabs>
          <DockHead $h={22} $mt={5}>Laser<I.Restore /></DockHead>
          <StatusLine>Disconnected</StatusLine>
          <BtnRow>
            <Btn><I.Play />Start</Btn><Btn><I.Pause />Pause</Btn><Btn $gap={4}><I.Stop />Stop</Btn><Btn $gap={12}><I.Send />Send</Btn>
          </BtnRow>
          <BtnRow $mt={3}>
            <Btn $gap={3}><I.FrameDash />Frame</Btn><Btn $gap={3}><I.CircleDash />Frame</Btn><Btn>Save RD file</Btn><Btn>Run RD file</Btn>
          </BtnRow>
          <HomeRow>
            <Btn $w={95} $h={22} $gap={3}><I.Home />Home</Btn>
            <RightLabel>Start From:</RightLabel>
            <Combo $w={102} $h={20} $bg="#e1e1e1" $bd="#adadad" $color="#0a4a20">Absolute Coords</Combo>
          </HomeRow>
          <OriginRow>
            <BottomOpt><Toggle $c="#6e2f2f" />Cut Selected Graphics</BottomOpt>
            <OriginLabel>Job Origin</OriginLabel>
            <RadioGrid>
              {Array.from({ length: 9 }, (_, i) => <Radio key={i} $on={i === 2} />)}
            </RadioGrid>
          </OriginRow>
          <OptRow $mt={3}>
            <OptionLine $dis $w={207}><Toggle $c="#808080" />Use Selection Origin</OptionLine>
            <Btn $w={204} $h={20} $gap={4}><I.Cross />Show Last Position</Btn>
          </OptRow>
          <OptRow $mt={4}>
            <OptionLine $w={207}><Toggle $c="#33cc33" $on />Optimize Cut Path</OptionLine>
            <Btn $w={204} $h={20}>Optimization Settings</Btn>
          </OptRow>
          <DeviceRow>
            <Btn $w={73} $h={21}>Devices</Btn>
            <Combo $w={164} $h={20} $bg="#e1e1e1" $bd="#adadad" $color="#111" $ml={7}>(Auto)<Chev c="#555" /></Combo>
            <Combo $w={160} $h={20} $bg="#e1e1e1" $bd="#adadad" $color="#111" $ml={6}>Ruida</Combo>
          </DeviceRow>
          <Tabs $foot><Tab $on $w={50}>Laser</Tab><Tab $w={54}>Library</Tab></Tabs>
        </Dock>
      </Main>
      <Palette>{colors.map((c, i) => <Swatch key={i} $c={c} $sel={i === 0} />)}</Palette>
      <StatusBar>
        <StatusCell $w={382} $pl={5} $line>x: 666.00 , y: 88.00 mm</StatusCell>
        <StatusCell $w={300} $pl={4}>No device found</StatusCell>
      </StatusBar>
    </Page>
  );
}
